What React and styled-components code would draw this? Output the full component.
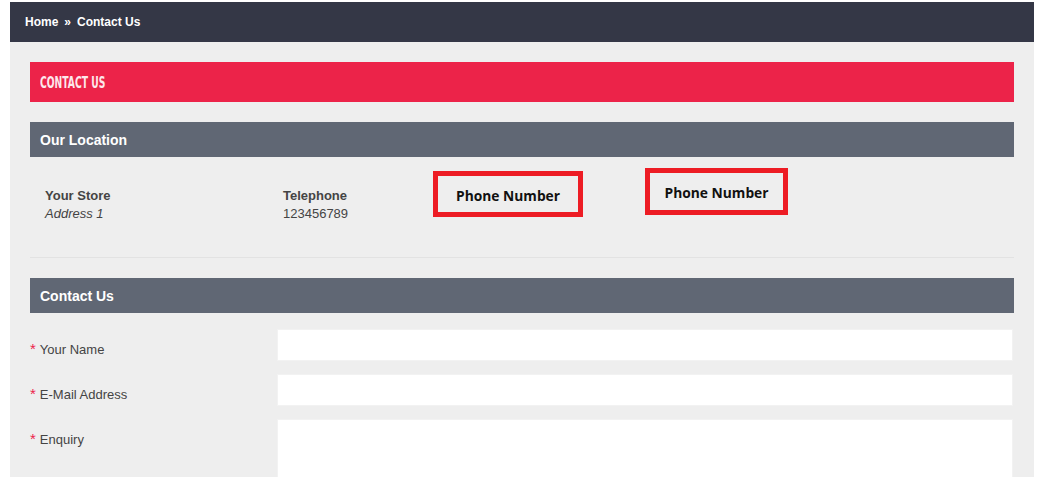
import React from "react";
import styled, { createGlobalStyle } from "styled-components";

const GlobalStyle = createGlobalStyle`
  html, body { margin: 0; padding: 0; background: #ffffff; }
  body { font-family: "Liberation Sans", Arial, sans-serif; color: #444; }
  * { box-sizing: border-box; }
`;

const Page = styled.div`
  padding: 2px 7px 0 10px;
  width: 1041px;
  height: 477px;
  overflow: hidden;
`;

const Shell = styled.div`
  width: 1024px;
  background: #eeeeee;
  min-height: 475px;
`;

const Breadcrumb = styled.nav`
  height: 40px;
  background: #343746;
  display: flex;
  align-items: center;
  padding-left: 15px;
  gap: 6px;
  color: #fff;
  font-size: 12px;
  font-weight: bold;
`;

const Crumb = styled.span`
  color: #fff;
`;

const Sep = styled.span`
  font-size: 12px;
`;

const Content = styled.div`
  padding: 20px 20px 0 20px;
`;

const PageTitle = styled.h1`
  margin: 0 0 20px;
  height: 40px;
  background: #ec2349;
  color: #fde8ec;
  display: flex;
  align-items: center;
  padding-left: 10px;
  font-family: "DejaVu Sans Condensed", "Liberation Sans", sans-serif;
  font-weight: bold;
  font-size: 16px;
  text-transform: uppercase;
`;

const TitleText = styled.span`
  display: inline-block;
  transform: scaleX(0.64);
  transform-origin: left center;
  white-space: nowrap;
`;

const SectionHead = styled.h2`
  margin: 0;
  height: 35px;
  background: #606774;
  color: #fff;
  display: flex;
  align-items: center;
  padding-left: 10px;
  font-size: 14px;
  font-weight: bold;
`;

const Location = styled.div`
  display: flex;
  align-items: flex-start;
  padding: 11px 0 0 15px;
  height: 101px;
  border-bottom: 1px solid #e2e2e2;
  margin-bottom: 20px;
`;

const InfoCol = styled.div`
  width: ${(p) => p.$w}px;
  padding-top: 19px;
  font-size: 13px;
  line-height: 18px;
  color: #444;
`;

const InfoTitle = styled.div`
  font-weight: bold;
`;

const InfoText = styled.div`
  font-style: ${(p) => (p.$italic ? "italic" : "normal")};
`;

const Callout = styled.div`
  width: ${(p) => p.$w}px;
  height: ${(p) => p.$h}px;
  margin-top: ${(p) => p.$top}px;
  margin-left: ${(p) => p.$ml || 0}px;
  border: 5px solid #ed1c24;
  display: flex;
  align-items: center;
  justify-content: center;
  font-family: "Open Sans", "DejaVu Sans", sans-serif;
  font-weight: bold;
  font-size: 13.8px;
  color: #111;
  padding-top: 2px;
`;

const Form = styled.form`
  display: flex;
  flex-direction: column;
  gap: 13px;
  padding-top: 16px;
`;

const Row = styled.div`
  display: grid;
  grid-template-columns: 247px 736px;
  align-items: start;
`;

const Label = styled.label`
  padding-top: 11px;
  font-size: 13px;
  color: #444;
`;

const Star = styled.span`
  color: #ec2349;
  font-size: 15px;
  margin-right: 4px;
`;

const Input = styled.input`
  display: block;
  height: 32px;
  border: 1px solid #f2f2f2;
  background: #fff;
  outline: none;
  width: 100%;
`;

const TextArea = styled.textarea`
  display: block;
  height: 120px;
  border: 1px solid #f2f2f2;
  background: #fff;
  resize: none;
  outline: none;
  width: 100%;
`;

const fields = [
  { label: "Your Name", type: "input" },
  { label: "E-Mail Address", type: "input" },
  { label: "Enquiry", type: "textarea" },
];

export default function App() {
  return (
    <>
      <GlobalStyle />
      <Page>
        <Shell>
          <Breadcrumb>
            <Crumb>Home</Crumb>
            <Sep>»</Sep>
            <Crumb>Contact Us</Crumb>
          </Breadcrumb>
          <Content>
            <PageTitle>
              <TitleText>Contact Us</TitleText>
            </PageTitle>
            <SectionHead>Our Location</SectionHead>
            <Location>
              <InfoCol $w={238}>
                <InfoTitle>Your Store</InfoTitle>
                <InfoText $italic>Address 1</InfoText>
              </InfoCol>
              <InfoCol $w={150}>
                <InfoTitle>Telephone</InfoTitle>
                <InfoText>123456789</InfoText>
              </InfoCol>
              <Callout $w={150} $h={46} $top={3}>Phone Number</Callout>
              <Callout $w={143} $h={47} $top={0} $ml={62}>Phone Number</Callout>
            </Location>
            <SectionHead>Contact Us</SectionHead>
            <Form>
              {fields.map((f) => (
                <Row key={f.label}>
                  <Label>
                    <Star>*</Star>
                    {f.label}
                  </Label>
                  {f.type === "input" ? <Input /> : <TextArea />}
                </Row>
              ))}
            </Form>
          </Content>
        </Shell>
      </Page>
    </>
  );
}
